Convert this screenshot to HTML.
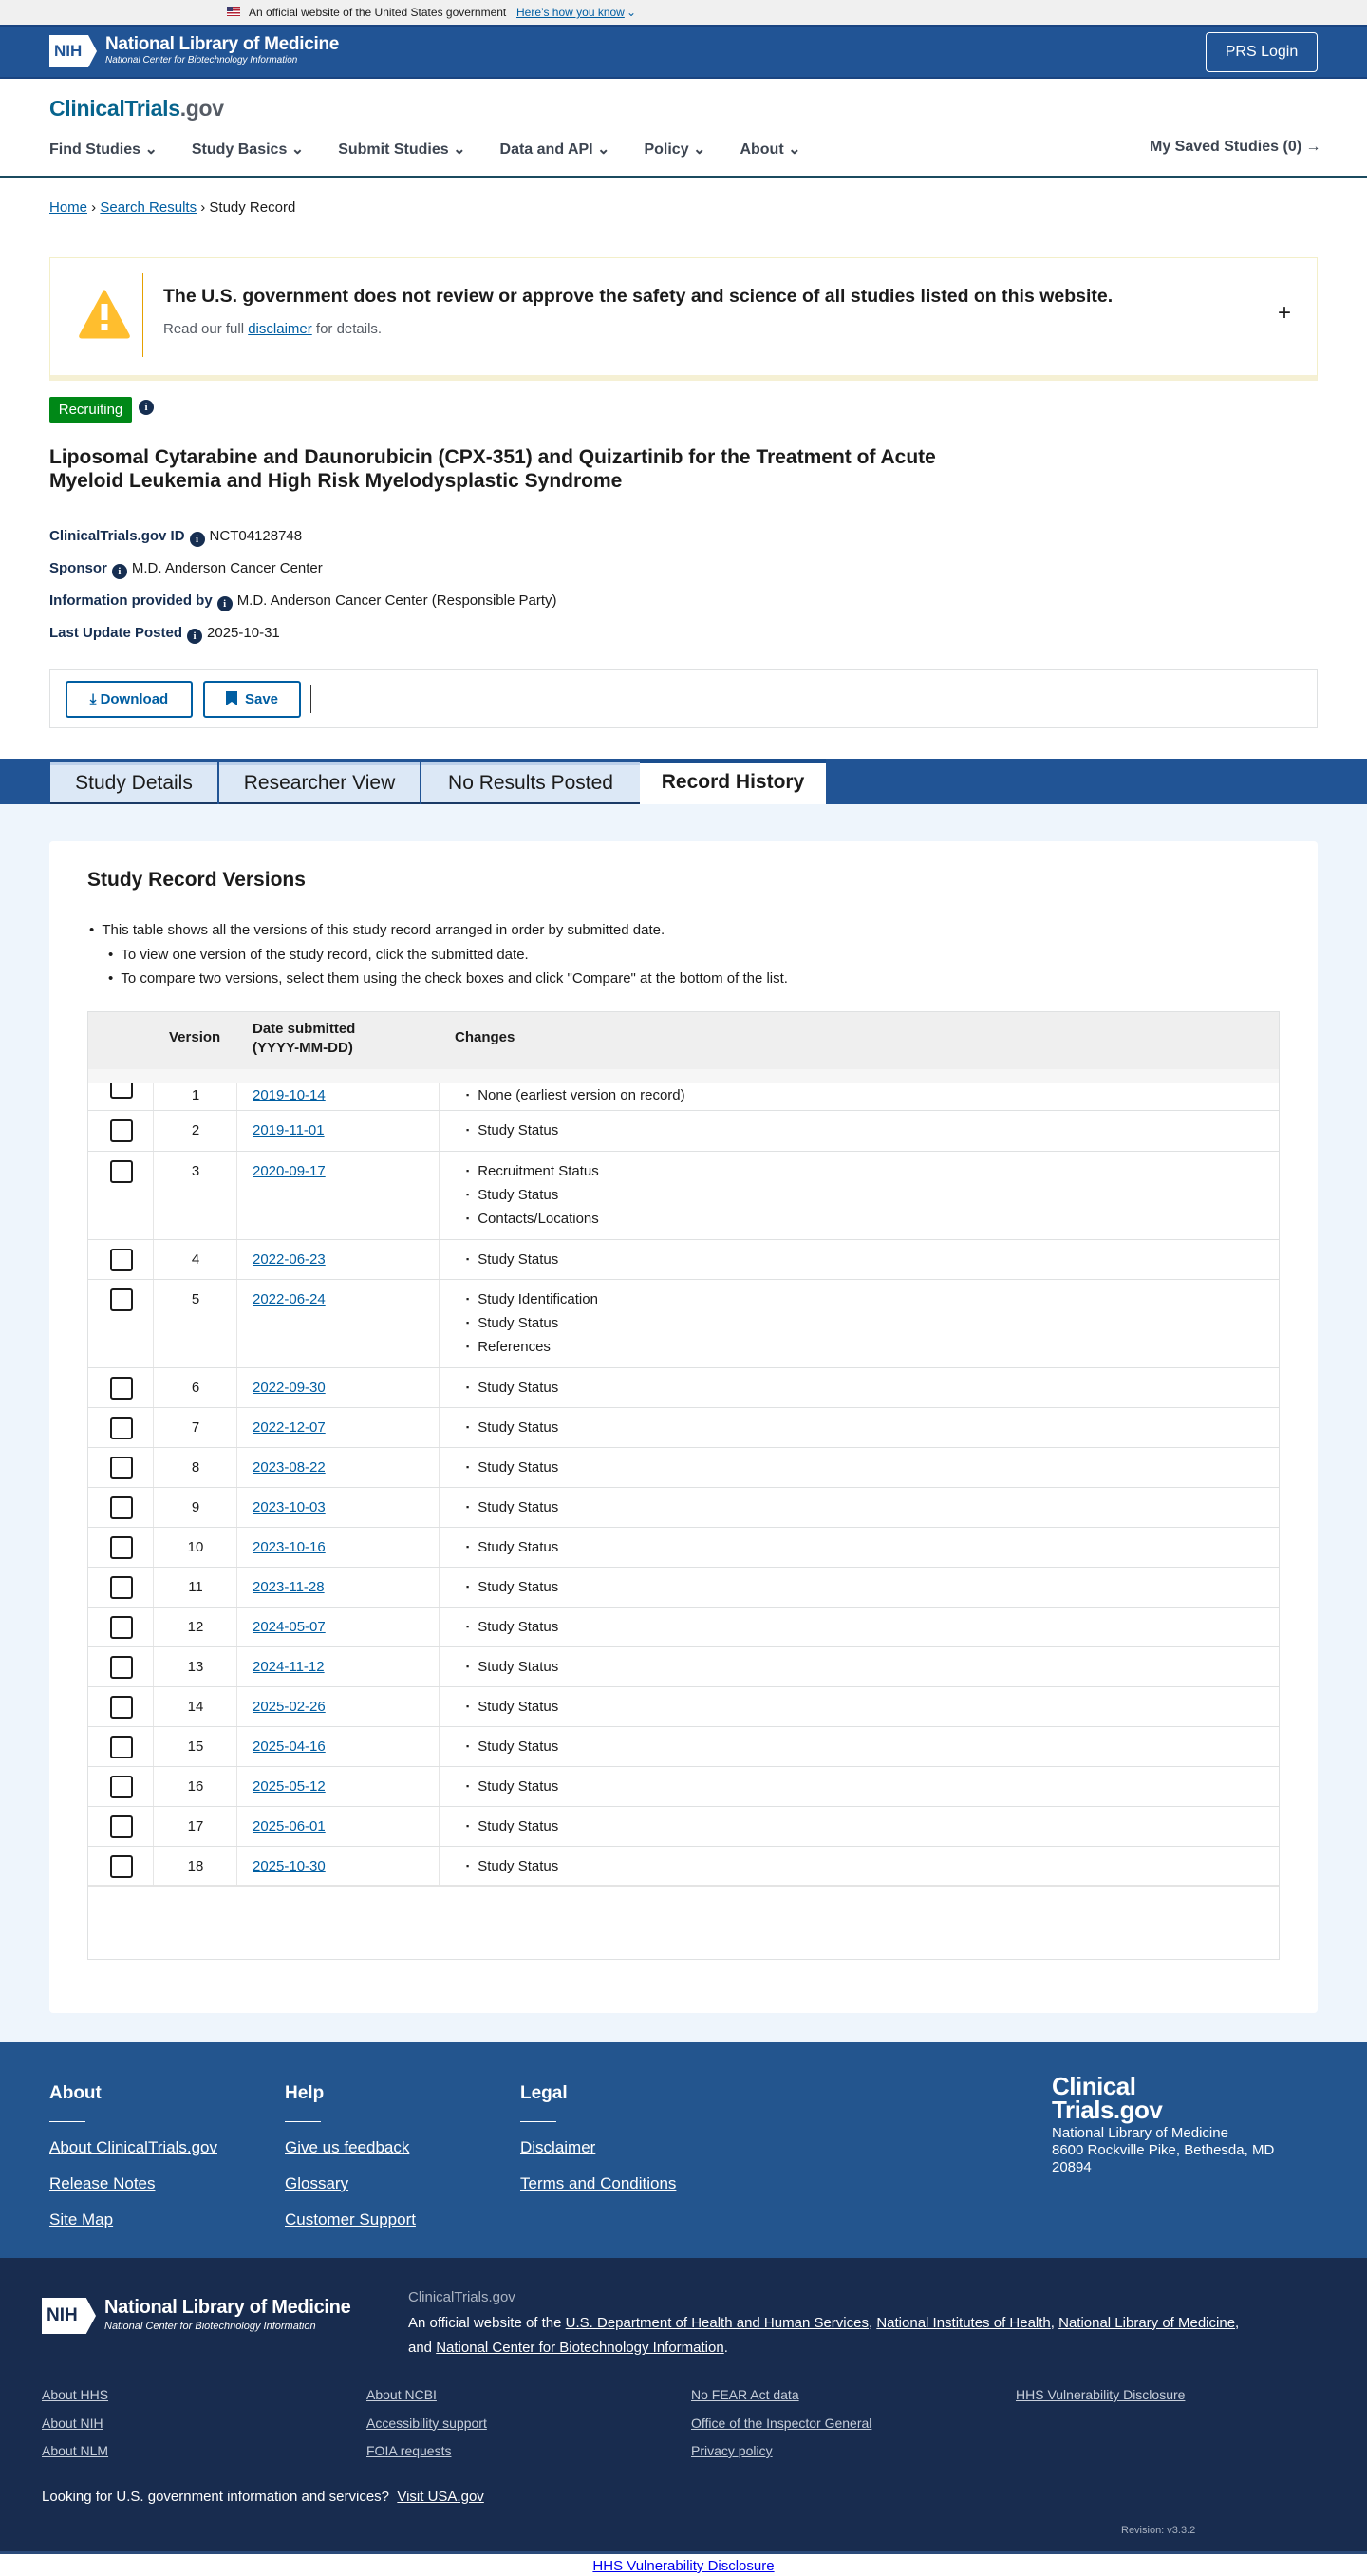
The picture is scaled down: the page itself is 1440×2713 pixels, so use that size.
<!DOCTYPE html>
<html><head><meta charset="utf-8">
<style>
*{box-sizing:border-box;margin:0;padding:0}
body{width:1440px;height:2713px;position:relative;font-family:"Liberation Sans",Arial,sans-serif;color:#1b1b1b;background:#fff;overflow:hidden;font-size:16px}
.a{position:absolute}
a{color:#005ea2;text-decoration:underline}
.ic{display:inline-block;width:16px;height:16px;border-radius:50%;background:#162e51;color:#fff;font-size:11px;font-weight:bold;text-align:center;line-height:16px;font-family:"Liberation Serif",serif;vertical-align:-2px;margin:0 5px}
.nav span{margin-right:36px}
.cb{position:absolute;left:23px;width:24px;height:24px;border:2px solid #1b1b1b;border-radius:3px;background:#fff}
.row{position:absolute;left:0;width:1255px;border-bottom:1px solid #dfe1e2;font-size:15px}
.row .v{position:absolute;left:69px;width:88px;text-align:center}
.row .d{position:absolute;left:173px}
.row ul{position:absolute;left:398px;list-style:none}
.row li{height:25px}
.row li:before{content:"▪";font-size:9px;margin-right:9px;vertical-align:2px}
.fl a{color:#fff;display:block;font-size:17px;height:38px}
.fl h4{color:#fff;font-size:19px;font-weight:bold;height:40px}
.fl i{display:block;width:38px;height:1px;background:#fff;margin-bottom:17px}
.dl a{color:#c7cfdb;display:block;font-size:14px;height:29.5px}
</style></head><body>
<div class="a" style="left:0;top:0;width:1440px;height:26px;background:#f0f0f0;font-size:12px">
 <div class="a" style="left:239px;top:7px;width:14px;height:10px;background:repeating-linear-gradient(#b22234 0 1.5px,#fff 1.5px 3px)"><div style="width:6px;height:5px;background:#3c3b6e"></div></div>
 <span class="a" style="left:262px;top:6px;color:#1b1b1b">An official website of the United States government</span>
 <span class="a" style="left:544px;top:6px;color:#005ea2;text-decoration:underline">Here’s how you know</span><span class="a" style="left:660px;top:6px;color:#005ea2">⌄</span>
</div>
<div class="a" style="left:0;top:26px;width:1440px;height:57px;background:#215495;border-top:2px solid #1a4480;border-bottom:2px solid #1a4480">
 <div class="a" style="left:52px;top:9px;width:50px;height:34px;background:#fff;clip-path:polygon(0 0,82% 0,100% 50%,82% 100%,0 100%);color:#215495;font-weight:bold;font-size:17px;line-height:34px;padding-left:5px">NIH</div>
 <div class="a" style="left:111px;top:8px;color:#fff;font-size:19px;font-weight:bold;letter-spacing:-.3px">National Library of Medicine</div>
 <div class="a" style="left:111px;top:30px;color:#fff;font-size:10px;font-style:italic">National Center for Biotechnology Information</div>
 <div class="a" style="left:1270px;top:6px;width:118px;height:42px;border:1px solid #fff;border-radius:4px;color:#fff;font-size:16px;text-align:center;line-height:40px">PRS Login</div>
</div>
<div class="a" style="left:52px;top:101px;font-size:23px;font-weight:bold;letter-spacing:-.3px"><span style="color:#07648d">ClinicalTrials</span><span style="color:#565c65">.gov</span></div>
<div class="a nav" style="left:52px;top:147px;font-size:16px;font-weight:bold;color:#3d4551">
 <span>Find Studies ⌄</span><span>Study Basics ⌄</span><span>Submit Studies ⌄</span><span>Data and API ⌄</span><span>Policy ⌄</span><span>About ⌄</span></div>
<div class="a" style="left:1211px;top:146px;font-size:16px;font-weight:bold;color:#3d4551">My Saved Studies (0) →</div>
<div class="a" style="left:0;top:185px;width:1440px;height:2px;background:#1b4b5f"></div>
<div class="a" style="left:52px;top:210px;font-size:15px"><a>Home</a> › <a>Search Results</a> › Study Record</div>
<div class="a" style="left:52px;top:271px;width:1336px;height:130px;border:1px solid #f3efc9;border-bottom:6px solid #f5f0d4;background:#fff">
 <svg class="a" style="left:30px;top:33px" width="54" height="52" viewBox="0 0 54 52"><path d="M27 2 L52 48 Q53 50 51 50 L3 50 Q1 50 2 48 Z" fill="#ffbe2e" stroke="#ffbe2e" stroke-linejoin="round" stroke-width="3"/><rect x="23.5" y="15" width="7" height="17" fill="#fff"/><rect x="23.5" y="36" width="7" height="7" fill="#fff"/></svg>
 <div class="a" style="left:97px;top:16px;width:1px;height:88px;background:#e5a000"></div>
 <div class="a" style="left:119px;top:29px;font-size:19.5px;font-weight:bold">The U.S. government does not review or approve the safety and science of all studies listed on this website.</div>
 <div class="a" style="left:119px;top:66px;font-size:15px;color:#565c65">Read our full <a>disclaimer</a> for details.</div>
 <div class="a" style="left:1293px;top:44px;font-size:24px">+</div>
</div>
<div class="a" style="left:52px;top:418px;width:87px;height:27px;background:#008817;color:#fff;font-size:15px;line-height:27px;text-align:center;border-radius:2px">Recruiting</div>
<span class="a ic" style="left:141px;top:421px">i</span>
<div class="a" style="left:52px;top:469px;font-size:21px;font-weight:bold;line-height:25px;width:1000px">Liposomal Cytarabine and Daunorubicin (CPX-351) and Quizartinib for the Treatment of Acute<br>Myeloid Leukemia and High Risk Myelodysplastic Syndrome</div>
<div class="a" style="left:52px;top:548px;font-size:15px;line-height:34px">
 <div><b style="color:#162e51">ClinicalTrials.gov ID</b><span class="ic">i</span>NCT04128748</div>
 <div><b style="color:#162e51">Sponsor</b><span class="ic">i</span>M.D. Anderson Cancer Center</div>
 <div><b style="color:#162e51">Information provided by</b><span class="ic">i</span>M.D. Anderson Cancer Center (Responsible Party)</div>
 <div><b style="color:#162e51">Last Update Posted</b><span class="ic">i</span>2025-10-31</div>
</div>
<div class="a" style="left:52px;top:705px;width:1336px;height:62px;border:1px solid #dfe1e2">
 <div class="a" style="left:16px;top:11px;width:134px;height:39px;border:2px solid #005ea2;border-radius:3px;color:#005ea2;font-weight:bold;font-size:15px;line-height:35px;text-align:center">⤓ Download</div>
 <div class="a" style="left:161px;top:11px;width:103px;height:39px;border:2px solid #005ea2;border-radius:3px;color:#005ea2;font-weight:bold;font-size:15px;line-height:35px;text-align:center"><svg width="12" height="15" style="vertical-align:-2px;margin-right:8px"><path d="M0 0H12V15L6 11L0 15Z" fill="#005ea2"/></svg>Save</div>
 <div class="a" style="left:274px;top:15px;width:1px;height:30px;background:#333"></div>
</div>
<div class="a" style="left:0;top:799px;width:1440px;height:48px;background:#215495">
 <div class="a" style="left:53px;top:3px;width:176px;height:45px;background:#dce8f6;border-top:4px solid #bcd0ea;border-bottom:2px solid #1a3a66;font-size:21px;line-height:38px;text-align:center">Study Details</div>
 <div class="a" style="left:231px;top:3px;width:211px;height:45px;background:#dce8f6;border-top:4px solid #bcd0ea;border-bottom:2px solid #1a3a66;font-size:21px;line-height:38px;text-align:center">Researcher View</div>
 <div class="a" style="left:444px;top:3px;width:230px;height:45px;background:#dce8f6;border-top:4px solid #bcd0ea;border-bottom:2px solid #1a3a66;font-size:21px;line-height:38px;text-align:center">No Results Posted</div>
 <div class="a" style="left:674px;top:0;width:196px;height:48px;background:#fff;border-top:5px solid #1a4e8e;font-size:21px;font-weight:bold;line-height:40px;text-align:center">Record History</div>
</div>
<div class="a" style="left:0;top:847px;width:1440px;height:1304px;background:#eef5fc"></div>
<div class="a" style="left:52px;top:886px;width:1336px;height:1234px;background:#fff;border-radius:4px"></div>
<div class="a" style="left:92px;top:915px;font-size:21px;font-weight:bold">Study Record Versions</div>
<div class="a" style="left:94px;top:967px;font-size:15px;line-height:25.5px">
 <div>•&nbsp; This table shows all the versions of this study record arranged in order by submitted date.</div>
 <div style="margin-left:20px">•&nbsp; To view one version of the study record, click the submitted date.</div>
 <div style="margin-left:20px">•&nbsp; To compare two versions, select them using the check boxes and click "Compare" at the bottom of the list.</div>
</div>
<div class="a" style="left:92px;top:1065px;width:1256px;height:999px;border:1px solid #dfe1e2;overflow:hidden">
 <div class="a" style="left:68px;top:0;width:1px;height:920px;background:#e6e6e6"></div>
 <div class="a" style="left:156px;top:0;width:1px;height:920px;background:#e6e6e6"></div>
 <div class="a" style="left:369px;top:0;width:1px;height:920px;background:#e6e6e6"></div>
 <div class="row" style="top:75px;height:29px"><div class="cb" style="top:-8px"></div><span class="v" style="top:4px">1</span><a class="d" style="top:4px">2019-10-14</a><ul style="top:4px"><li>None (earliest version on record)</li></ul></div>
 <div class="a" style="left:0;top:0;width:1256px;height:75px;background:#efefef;z-index:2;font-weight:bold;font-size:15px">
  <div class="a" style="left:0;top:60px;width:1256px;height:15px;background:#f6f6f6"></div>
  <span class="a" style="left:85px;top:18px">Version</span>
  <span class="a" style="left:173px;top:8px;line-height:20px">Date submitted<br>(YYYY-MM-DD)</span>
  <span class="a" style="left:386px;top:18px">Changes</span>
 </div>
 <div class="row" style="top:104px;height:43px"><div class="cb" style="top:9px"></div><span class="v" style="top:12px">2</span><a class="d" style="top:12px">2019-11-01</a><ul style="top:12px"><li>Study Status</li></ul></div>
 <div class="row" style="top:147px;height:93px"><div class="cb" style="top:9px"></div><span class="v" style="top:12px">3</span><a class="d" style="top:12px">2020-09-17</a><ul style="top:12px"><li>Recruitment Status</li><li>Study Status</li><li>Contacts/Locations</li></ul></div>
 <div class="row" style="top:240px;height:42px"><div class="cb" style="top:9px"></div><span class="v" style="top:12px">4</span><a class="d" style="top:12px">2022-06-23</a><ul style="top:12px"><li>Study Status</li></ul></div>
 <div class="row" style="top:282px;height:93px"><div class="cb" style="top:9px"></div><span class="v" style="top:12px">5</span><a class="d" style="top:12px">2022-06-24</a><ul style="top:12px"><li>Study Identification</li><li>Study Status</li><li>References</li></ul></div>
 <div class="row" style="top:375px;height:42px"><div class="cb" style="top:9px"></div><span class="v" style="top:12px">6</span><a class="d" style="top:12px">2022-09-30</a><ul style="top:12px"><li>Study Status</li></ul></div>
 <div class="row" style="top:417px;height:42px"><div class="cb" style="top:9px"></div><span class="v" style="top:12px">7</span><a class="d" style="top:12px">2022-12-07</a><ul style="top:12px"><li>Study Status</li></ul></div>
 <div class="row" style="top:459px;height:42px"><div class="cb" style="top:9px"></div><span class="v" style="top:12px">8</span><a class="d" style="top:12px">2023-08-22</a><ul style="top:12px"><li>Study Status</li></ul></div>
 <div class="row" style="top:501px;height:42px"><div class="cb" style="top:9px"></div><span class="v" style="top:12px">9</span><a class="d" style="top:12px">2023-10-03</a><ul style="top:12px"><li>Study Status</li></ul></div>
 <div class="row" style="top:543px;height:42px"><div class="cb" style="top:9px"></div><span class="v" style="top:12px">10</span><a class="d" style="top:12px">2023-10-16</a><ul style="top:12px"><li>Study Status</li></ul></div>
 <div class="row" style="top:585px;height:42px"><div class="cb" style="top:9px"></div><span class="v" style="top:12px">11</span><a class="d" style="top:12px">2023-11-28</a><ul style="top:12px"><li>Study Status</li></ul></div>
 <div class="row" style="top:627px;height:42px"><div class="cb" style="top:9px"></div><span class="v" style="top:12px">12</span><a class="d" style="top:12px">2024-05-07</a><ul style="top:12px"><li>Study Status</li></ul></div>
 <div class="row" style="top:669px;height:42px"><div class="cb" style="top:9px"></div><span class="v" style="top:12px">13</span><a class="d" style="top:12px">2024-11-12</a><ul style="top:12px"><li>Study Status</li></ul></div>
 <div class="row" style="top:711px;height:42px"><div class="cb" style="top:9px"></div><span class="v" style="top:12px">14</span><a class="d" style="top:12px">2025-02-26</a><ul style="top:12px"><li>Study Status</li></ul></div>
 <div class="row" style="top:753px;height:42px"><div class="cb" style="top:9px"></div><span class="v" style="top:12px">15</span><a class="d" style="top:12px">2025-04-16</a><ul style="top:12px"><li>Study Status</li></ul></div>
 <div class="row" style="top:795px;height:42px"><div class="cb" style="top:9px"></div><span class="v" style="top:12px">16</span><a class="d" style="top:12px">2025-05-12</a><ul style="top:12px"><li>Study Status</li></ul></div>
 <div class="row" style="top:837px;height:42px"><div class="cb" style="top:9px"></div><span class="v" style="top:12px">17</span><a class="d" style="top:12px">2025-06-01</a><ul style="top:12px"><li>Study Status</li></ul></div>
 <div class="row" style="top:879px;height:42px;border-bottom:2px solid #e4e4e4"><div class="cb" style="top:9px"></div><span class="v" style="top:12px">18</span><a class="d" style="top:12px">2025-10-30</a><ul style="top:12px"><li>Study Status</li></ul></div>
</div>
<div class="a" style="left:0;top:2151px;width:1440px;height:227px;background:#23558e">
 <div class="a fl" style="left:52px;top:43px"><h4>About</h4><i></i><a>About ClinicalTrials.gov</a><a>Release Notes</a><a>Site Map</a></div>
 <div class="a fl" style="left:300px;top:43px"><h4>Help</h4><i></i><a>Give us feedback</a><a>Glossary</a><a>Customer Support</a></div>
 <div class="a fl" style="left:548px;top:43px"><h4>Legal</h4><i></i><a>Disclaimer</a><a>Terms and Conditions</a></div>
 <div class="a" style="left:1108px;top:34px;color:#fff;font-size:26px;font-weight:bold;line-height:25px;letter-spacing:-.5px">Clinical<br>Trials.gov</div>
 <div class="a" style="left:1108px;top:87px;color:#fff;font-size:15px;line-height:18px">National Library of Medicine<br>8600 Rockville Pike, Bethesda, MD<br>20894</div>
</div>
<div class="a" style="left:0;top:2378px;width:1440px;height:312px;background:#182c4f;border-bottom:3px solid #2a4a7a">
 <div class="a" style="left:44px;top:42px;width:57px;height:38px;background:#fff;clip-path:polygon(0 0,82% 0,100% 50%,82% 100%,0 100%);color:#182c4f;font-weight:bold;font-size:19px;line-height:38px;padding-left:5px">NIH</div>
 <div class="a" style="left:110px;top:41px;color:#fff;font-size:20px;font-weight:bold;letter-spacing:-.3px">National Library of Medicine</div>
 <div class="a" style="left:110px;top:66px;color:#fff;font-size:11px;font-style:italic">National Center for Biotechnology Information</div>
 <div class="a" style="left:430px;top:33px;color:#aab3c2;font-size:15px">ClinicalTrials.gov</div>
 <div class="a" style="left:430px;top:56px;color:#fff;font-size:15px;line-height:26px;width:920px">An official website of the <u>U.S. Department of Health and Human Services</u>, <u>National Institutes of Health</u>, <u>National Library of Medicine</u>,<br>and <u>National Center for Biotechnology Information</u>.</div>
 <div class="a dl" style="left:44px;top:136px"><a>About HHS</a><a>About NIH</a><a>About NLM</a></div>
 <div class="a dl" style="left:386px;top:136px"><a>About NCBI</a><a>Accessibility support</a><a>FOIA requests</a></div>
 <div class="a dl" style="left:728px;top:136px"><a>No FEAR Act data</a><a>Office of the Inspector General</a><a>Privacy policy</a></div>
 <div class="a dl" style="left:1070px;top:136px"><a>HHS Vulnerability Disclosure</a></div>
 <div class="a" style="left:44px;top:243px;color:#fff;font-size:15px">Looking for U.S. government information and services?&nbsp; <u>Visit USA.gov</u></div>
 <div class="a" style="left:1181px;top:281px;color:#aab3c2;font-size:11px">Revision: v3.3.2</div>
</div>
<div class="a" style="left:0;top:2694px;width:1440px;text-align:center;font-size:15px"><a style="color:#0000ee">HHS Vulnerability Disclosure</a></div>
</body></html>
